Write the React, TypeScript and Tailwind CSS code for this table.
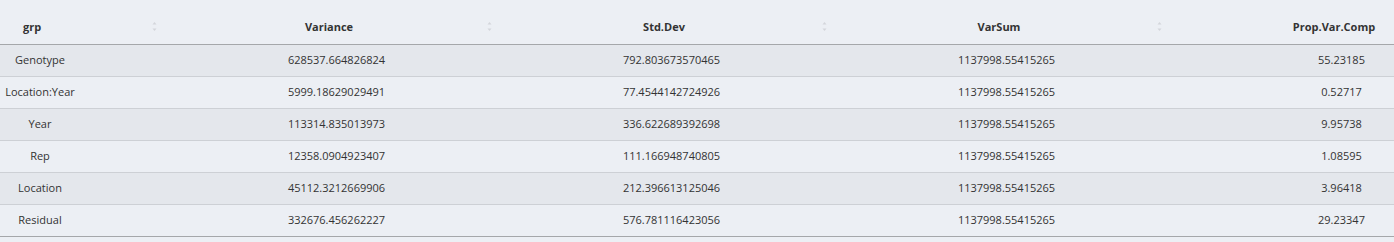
import React from 'react';

type Row = {
  grp: string;
  variance: string;
  stdDev: string;
  varSum: string;
  prop: string;
};

const rows: Row[] = [
  { grp: 'Genotype', variance: '628537.664826824', stdDev: '792.803673570465', varSum: '1137998.55415265', prop: '55.23185' },
  { grp: 'Location:Year', variance: '5999.18629029491', stdDev: '77.4544142724926', varSum: '1137998.55415265', prop: '0.52717' },
  { grp: 'Year', variance: '113314.835013973', stdDev: '336.622689392698', varSum: '1137998.55415265', prop: '9.95738' },
  { grp: 'Rep', variance: '12358.0904923407', stdDev: '111.166948740805', varSum: '1137998.55415265', prop: '1.08595' },
  { grp: 'Location', variance: '45112.3212669906', stdDev: '212.396613125046', varSum: '1137998.55415265', prop: '3.96418' },
  { grp: 'Residual', variance: '332676.456262227', stdDev: '576.781116423056', varSum: '1137998.55415265', prop: '29.23347' },
];

const cols = 'grid grid-cols-[169px_335px_335px_335px_335px]';

function SortIcon() {
  return (
    <svg className="absolute right-[12px] top-[21px]" width="5" height="11" viewBox="0 0 5 11">
      <path d="M2.5 1 L4.5 3.5 L0.5 3.5 Z" fill="#d3d6db" />
      <path d="M0.5 7.5 L4.5 7.5 L2.5 10 Z" fill="#d3d6db" />
    </svg>
  );
}

function HeaderCell({ label, first }: { label: string; first?: boolean }) {
  return (
    <div
      className={`relative flex items-center h-[44px] pt-[10px] ${
        first ? 'pl-[23px] justify-start' : 'pl-[18px] pr-[33px] justify-center'
      }`}
    >
      <span>{label}</span>
      <SortIcon />
    </div>
  );
}

export default function App() {
  return (
    <div
      className="w-[1394px] h-[242px] overflow-hidden bg-[#eceff4] text-[#333333] text-[11px]"
      style={{ fontFamily: '"Open Sans", "Noto Sans", sans-serif' }}
    >
      <div className="w-[1509px]">
        <div className={`${cols} font-bold border-b border-[#a5a7aa]`}>
          <HeaderCell label="grp" first />
          <HeaderCell label="Variance" />
          <HeaderCell label="Std.Dev" />
          <HeaderCell label="VarSum" />
          <HeaderCell label="Prop.Var.Comp" />
        </div>

        {rows.map((row, i) => (
          <div
            key={row.grp}
            className={`${cols} h-[32px] items-center border-b ${
              i === rows.length - 1 ? 'border-[#a5a7aa]' : 'border-[#cdd0d5]'
            } ${i % 2 === 0 ? 'bg-[#e4e7ec]' : 'bg-[#eceff4]'}`}
          >
            <div>
              <div className="w-[80px] text-center">{row.grp}</div>
            </div>
            <div className="text-center">{row.variance}</div>
            <div className="text-center">{row.stdDev}</div>
            <div className="text-center">{row.varSum}</div>
            <div className="text-center">{row.prop}</div>
          </div>
        ))}
      </div>
    </div>
  );
}
